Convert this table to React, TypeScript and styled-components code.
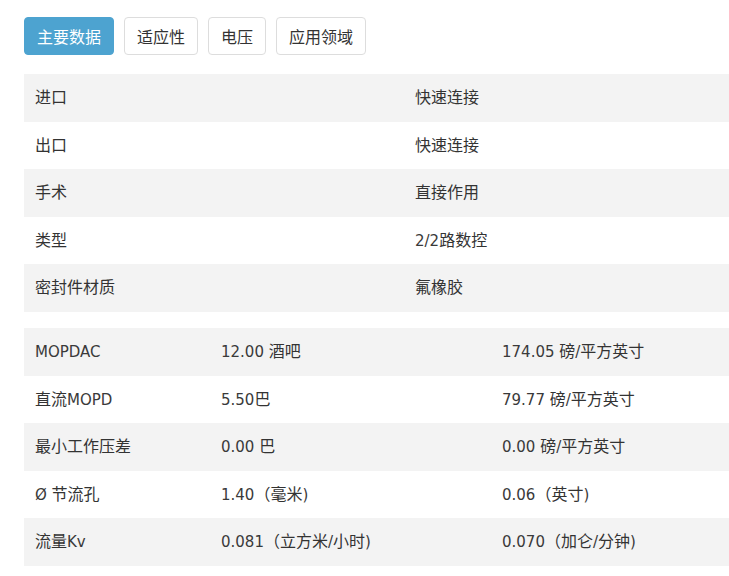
import React from "react";
import styled, { createGlobalStyle } from "styled-components";

const Global = createGlobalStyle`
  html, body { margin: 0; padding: 0; background: #fff; }
  body {
    font-family: "DejaVu Sans", "Noto Sans CJK SC", sans-serif;
    color: #333;
    overflow: hidden;
  }
`;

const Page = styled.div`
  padding: 17px 0 0 24px;
  width: 705px;
`;

const Tabs = styled.div`
  display: flex;
  gap: 10px;
  margin-bottom: 19px;
`;

const Tab = styled.button<{ $active?: boolean }>`
  height: 38px;
  padding: 0 12px;
  font-family: "Noto Sans CJK SC", sans-serif;
  font-size: 16px;
  border-radius: 4px;
  border: 1px solid ${(p) => (p.$active ? "#4da3d0" : "#ddd")};
  background: ${(p) => (p.$active ? "#4da3d0" : "#fff")};
  color: ${(p) => (p.$active ? "#fff" : "#333")};
  cursor: pointer;
`;

const Table = styled.table`
  width: 705px;
  border-collapse: collapse;
  table-layout: fixed;
  margin-bottom: 16px;
  font-size: 15px;
`;

const Row = styled.tr`
  &:nth-child(odd) { background: #f3f3f3; }
`;

const Cell = styled.td`
  padding: 13px 11px 11px;
  line-height: 23.6px;
  white-space: nowrap;
  color: #3a3a3a;
`;

const Han = styled.span`
  font-family: "Noto Sans CJK SC", sans-serif;
  font-size: 16px;
  line-height: 1;
  color: #333;
`;

const CJK = /([\u3000-\u9fff\uff00-\uffef]+)/;

function Mixed({ text }: { text: string }) {
  return (
    <>
      {text.split(CJK).map((part, i) =>
        CJK.test(part) ? <Han key={i}>{part}</Han> : part ? <span key={i}>{part}</span> : null
      )}
    </>
  );
}

const basic: [string, string][] = [
  ["进口", "快速连接"],
  ["出口", "快速连接"],
  ["手术", "直接作用"],
  ["类型", "2/2路数控"],
  ["密封件材质", "氟橡胶"],
];

const pressure: [string, string, string][] = [
  ["MOPDAC", "12.00 酒吧", "174.05 磅/平方英寸"],
  ["直流MOPD", "5.50巴", "79.77 磅/平方英寸"],
  ["最小工作压差", "0.00 巴", "0.00 磅/平方英寸"],
  ["Ø 节流孔", "1.40（毫米)", "0.06（英寸)"],
  ["流量Kv", "0.081（立方米/小时)", "0.070（加仑/分钟)"],
];

export default function App() {
  return (
    <Page>
      <Global />
      <Tabs>
        <Tab $active>主要数据</Tab>
        <Tab>适应性</Tab>
        <Tab>电压</Tab>
        <Tab>应用领域</Tab>
      </Tabs>
      <Table>
        <colgroup>
          <col style={{ width: 380 }} />
          <col />
        </colgroup>
        <tbody>
          {basic.map(([a, b]) => (
            <Row key={a}>
              <Cell><Mixed text={a} /></Cell>
              <Cell><Mixed text={b} /></Cell>
            </Row>
          ))}
        </tbody>
      </Table>
      <Table>
        <colgroup>
          <col style={{ width: 186 }} />
          <col style={{ width: 281 }} />
          <col />
        </colgroup>
        <tbody>
          {pressure.map(([a, b, c]) => (
            <Row key={a}>
              <Cell><Mixed text={a} /></Cell>
              <Cell><Mixed text={b} /></Cell>
              <Cell><Mixed text={c} /></Cell>
            </Row>
          ))}
        </tbody>
      </Table>
    </Page>
  );
}
